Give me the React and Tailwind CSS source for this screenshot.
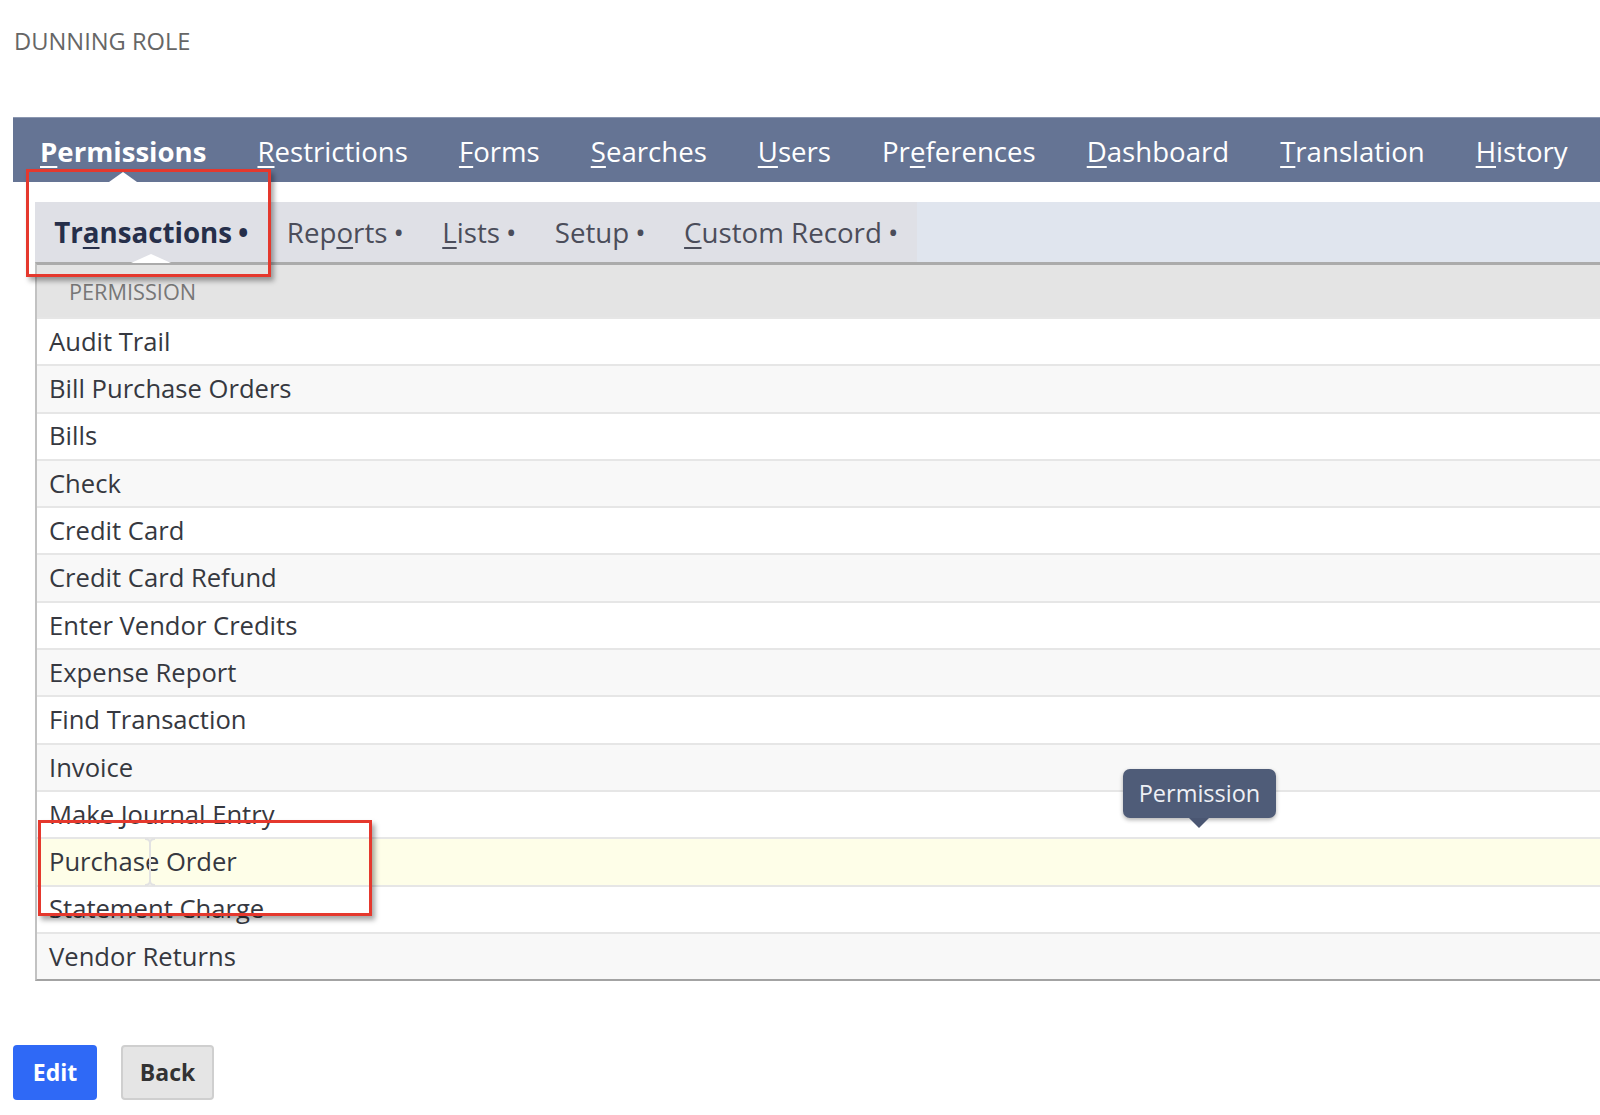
const navTabs = [
  { pre: '', key: 'P', post: 'ermissions', active: true },
  { pre: '', key: 'R', post: 'estrictions' },
  { pre: '', key: 'F', post: 'orms' },
  { pre: '', key: 'S', post: 'earches' },
  { pre: '', key: 'U', post: 'sers' },
  { pre: 'Pr', key: 'e', post: 'ferences' },
  { pre: '', key: 'D', post: 'ashboard' },
  { pre: '', key: 'T', post: 'ranslation' },
  { pre: '', key: 'H', post: 'istory' },
]

const subTabs = [
  { pre: 'Tr', key: 'a', post: 'nsactions', active: true },
  { pre: 'Rep', key: 'o', post: 'rts' },
  { pre: '', key: 'L', post: 'ists' },
  { pre: 'Setup', key: '', post: '' },
  { pre: '', key: 'C', post: 'ustom Record' },
]

const permissions = [
  'Audit Trail',
  'Bill Purchase Orders',
  'Bills',
  'Check',
  'Credit Card',
  'Credit Card Refund',
  'Enter Vendor Credits',
  'Expense Report',
  'Find Transaction',
  'Invoice',
  'Make Journal Entry',
  'Purchase Order',
  'Statement Charge',
  'Vendor Returns',
]

const AccessKey = ({ tab }) => (
  <>
    {tab.pre}
    {tab.key && <span className="underline decoration-[1.5px] underline-offset-[4px]">{tab.key}</span>}
    {tab.post}
  </>
)

export default function App() {
  return (
    <div className="relative h-[1115px] w-full overflow-hidden bg-white pl-[13px] font-['Open_Sans',sans-serif]">
      {/* page title */}
      <div className="h-[117px] pt-[30px] pl-[1px]">
        <h1 className="text-[23.7px] leading-none text-[#666666]">DUNNING ROLE</h1>
      </div>

      {/* main tabs */}
      <div className="flex h-[65px] gap-[51px] border-t border-[#8b97b0] bg-[#657494] pl-[27px]">
        {navTabs.map((tab) => (
          <div key={tab.key + tab.post} className="relative h-full pt-[20px]">
            <span className={`whitespace-nowrap text-[27.6px] leading-none text-white ${tab.active ? 'font-bold' : ''}`}>
              <AccessKey tab={tab} />
            </span>
            {tab.active && (
              <div className="absolute bottom-0 left-1/2 h-0 w-0 -translate-x-1/2 border-b-[10px] border-l-[14px] border-r-[14px] border-b-white border-l-transparent border-r-transparent" />
            )}
          </div>
        ))}
      </div>

      {/* sub tabs */}
      <div className="ml-[22px] mt-[20px] flex h-[60px] bg-[#e0e5ee]">
        <div className="flex h-full bg-[#dfe0e6]">
          {subTabs.map((tab) => (
            <div key={tab.pre + tab.post} className="relative h-full px-[19.2px] pt-[17px]">
              <span className={`whitespace-nowrap text-[27.7px] leading-none ${tab.active ? 'font-bold text-[#262f4a]' : 'text-[#4b4d5a]'}`}>
                <AccessKey tab={tab} />
                <span className="ml-[6px]">•</span>
              </span>
              {tab.active && (
                <div className="absolute bottom-[-1px] left-1/2 h-0 w-0 -translate-x-1/2 border-b-[9px] border-l-[20px] border-r-[20px] border-b-white border-l-transparent border-r-transparent" />
              )}
            </div>
          ))}
        </div>
      </div>

      {/* permission list */}
      <div className="ml-[22px] border-b-2 border-l-2 border-t-[3px] border-b-[#a3a3a3] border-l-[#c2c2c2] border-t-[#ababab]">
        <div className="flex h-[52px] items-center bg-[#e4e4e4] pl-[32px] pt-[2px]">
          <span className="text-[21.7px] leading-none text-[#777777]">PERMISSION</span>
        </div>
        {permissions.map((name, i) => (
          <div
            key={name}
            className={`flex h-[47.3px] items-center border-t-2 border-[#e6e6e6] pl-[12px] ${
              name === 'Purchase Order' ? 'bg-[#fefee8]' : i % 2 === 1 ? 'bg-[#f8f8f8]' : 'bg-white'
            }`}
          >
            <span className="text-[25.6px] leading-none text-[#363840]">{name}</span>
          </div>
        ))}
      </div>

      {/* actions */}
      <div className="mt-[64px] flex gap-[24px]">
        <button className="h-[55px] w-[84px] rounded-[4px] bg-[#2f69f6] text-[23px] font-bold text-white">Edit</button>
        <button className="h-[55px] w-[93px] rounded-[4px] border-2 border-[#cfcfcf] bg-[#e5e5e5] text-[23px] font-bold text-[#333333]">
          Back
        </button>
      </div>

      {/* I-beam cursor over Purchase Order */}
      <svg className="absolute left-[143px] top-[838px]" width="14" height="48" viewBox="0 0 14 48">
        <path d="M2 1 Q7 1 7 5 Q7 1 12 1 M7 5 V43 M2 47 Q7 47 7 43 Q7 47 12 47" fill="none" stroke="#e2e2e2" strokeWidth="2" />
      </svg>

      {/* tooltip */}
      <div className="absolute left-[1123px] top-[769px] flex h-[49px] w-[153px] items-center justify-center rounded-[7px] bg-[#4f5c78] shadow-[0_2px_4px_rgba(0,0,0,0.3)]">
        <span className="text-[23.5px] leading-none text-[#eef0f5]">Permission</span>
        <div className="absolute bottom-[-10px] left-[66px] h-0 w-0 border-l-[10px] border-r-[10px] border-t-[10px] border-l-transparent border-r-transparent border-t-[#4a5672]" />
      </div>

      {/* annotation boxes */}
      <div className="absolute left-[26px] top-[169px] h-[108px] w-[245px] border-[3.5px] border-[#e5382d] shadow-[3px_4px_5px_rgba(0,0,0,0.35)]" />
      <div className="absolute left-[38px] top-[820px] h-[96px] w-[334px] border-[3.5px] border-[#e5382d] shadow-[3px_4px_5px_rgba(0,0,0,0.35)]" />
    </div>
  )
}
